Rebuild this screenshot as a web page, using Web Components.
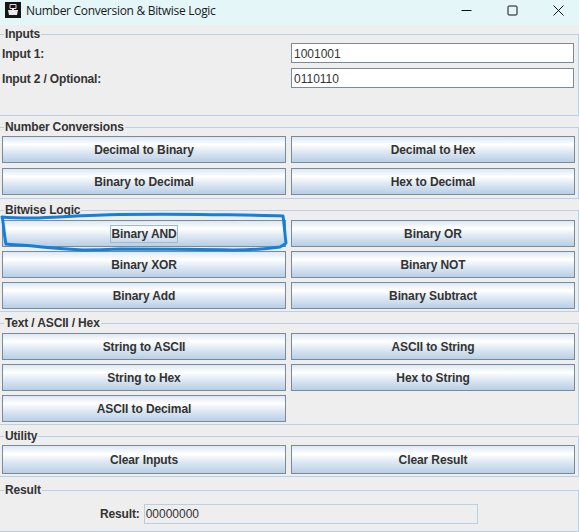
<!DOCTYPE html>
<html><head><meta charset="utf-8"><title>Number Conversion</title>
<style>
html,body{margin:0;padding:0;background:#eee;}
body{width:579px;height:532px;overflow:hidden;font:bold 12px "Liberation Sans",Arial,sans-serif;color:#333;letter-spacing:-.15px}
app-window{width:579px;height:532px;}
</style></head><body>
<template id="t-btn"><style>
:host{display:block;min-width:0}
button{display:block;width:100%;height:var(--h,27px);margin:0;padding:0;border:1px solid #7a8a99;background:linear-gradient(#dde8f3 0,#fff 30%,#dde8f3 60%,#b8cfe5 100%);font:bold 12px "Liberation Sans",Arial,sans-serif;letter-spacing:-.1px;color:#333;text-align:center;}
span{display:inline-block;padding:0;line-height:16px;border:1px solid transparent}
:host([focused]) span{border-color:#a3b8cc}
</style><button tabindex="-1"><span><slot></slot></span></button></template>

<template id="t-panel"><style>
:host{display:block}
fieldset{margin:0;padding:var(--pt,3px) 2px 2px 1px;border:1px solid #b8cfe5;border-left-width:0;min-width:0;box-sizing:border-box;height:var(--ph,auto)}
legend{margin-left:3px;padding:0 1px;height:14px;font:bold 12px/14px "Liberation Sans",Arial,sans-serif;letter-spacing:-.15px;color:#333}
.grid{display:grid;grid-template-columns:284px 284px;column-gap:5px;row-gap:var(--gap,4px);padding-left:1px;align-content:start}
</style><fieldset><legend><slot name="title"></slot></legend><div class="grid"><slot></slot></div></fieldset></template>

<template id="t-title"><style>
:host{display:flex;align-items:center;box-sizing:border-box;height:25px;padding-bottom:5px;background:#e5f6f9;font:12px "Open Sans","Noto Sans",sans-serif;letter-spacing:-.3px;color:#1a1a1a}
.icon{width:16px;height:16px;margin:0 5px;flex:none}
.t{flex:1;white-space:nowrap}
.c{box-sizing:border-box;width:46px;padding-left:4px;display:flex;align-items:center;justify-content:center;flex:none}
</style>
<svg class="icon" viewBox="0 0 16 16"><rect width="16" height="16" fill="#141414"/><path d="M5 2.500h6v4H5z" fill="none" stroke="#ddd"/><path d="M3 8h10l-1 5H4zM7 6h2v3H7z" fill="#e8e8e8"/></svg>
<span class="t"><slot></slot></span>
<span class="c"><svg width="11" height="11" viewBox="0 0 11 11"><path d="M0.500 5.500h10" stroke="#111" fill="none"/></svg></span>
<span class="c"><svg width="11" height="11" viewBox="0 0 11 11"><rect x="1" y="1" width="9" height="9" rx="1" stroke="#111" fill="none"/></svg></span>
<span class="c"><svg width="11" height="11" viewBox="0 0 11 11"><path d="M0.500 0.500l10 10M10.500 0.500l-10 10" stroke="#111" fill="none"/></svg></span>
</template>

<template id="t-field"><style>
:host{display:grid;grid-template-columns:289px 283px;align-items:center;height:20px}
.l{padding-top:1px}
.v{height:20px;box-sizing:border-box;border:1px solid #7a8a99;background:#fff;font:12px/20px "Liberation Sans",Arial,sans-serif;letter-spacing:0;color:#333;padding-left:2px}
</style><span class="l"><slot></slot></span><span class="v"><slot name="value"></slot></span></template>

<template id="t-result"><style>
:host{display:flex;align-items:center;height:20px;padding-left:98px}
.v{width:334px;height:20px;box-sizing:border-box;border:1px solid #b8cfe5;margin-left:4px;font:12px/18px "Liberation Sans",Arial,sans-serif;letter-spacing:0;color:#333;padding-left:1px}
</style><slot></slot><span class="v"><slot name="value"></slot></span></template>

<template id="t-win"><style>
:host{display:block;position:relative;background:#eee;overflow:hidden}
.body{display:flex;flex-direction:column}
svg{position:absolute;left:0;top:210px}
</style><slot name="bar"></slot><div class="body"><slot></slot></div>
<svg width="295" height="45" viewBox="0 0 295 45"><path d="M2 7C12 8 24 8 33 8C60 7 90 5 120 4.500C150 4 175 4 200 4.500C230 5 260 5 283 6C284 12 285 26 286 33C284 35 282 36 280 37C265 39 250 40 233 40C195 39 155 39 120 39C100 40 90 40 83 40C65 39 48 38 33 36C22 35 12 35 6 34C4 25 4 15 2 7Z" fill="none" stroke="#1580dc" stroke-width="3" stroke-linejoin="round"/></svg></template>

<app-window>
  <title-bar slot="bar">Number Conversion &amp; Bitwise Logic</title-bar>
  <group-panel style="margin-top:2px;--ph:89px;--pt:2px;--gap:5px">
    <span slot="title">Inputs</span>
    <text-row style="grid-column:1/3">Input 1:<span slot="value">1001001</span></text-row>
    <text-row style="grid-column:1/3">Input 2 / Optional:<span slot="value">0110110</span></text-row>
  </group-panel>
  <group-panel style="margin-top:4px;--ph:79px;--pt:2px;--gap:5px">
    <span slot="title">Number Conversions</span>
    <ui-btn>Decimal to Binary</ui-btn><ui-btn>Decimal to Hex</ui-btn>
    <ui-btn>Binary to Decimal</ui-btn><ui-btn>Hex to Decimal</ui-btn>
  </group-panel>
  <group-panel style="margin-top:4px;--ph:109px">
    <span slot="title">Bitwise Logic</span>
    <ui-btn focused>Binary AND</ui-btn><ui-btn>Binary OR</ui-btn>
    <ui-btn>Binary XOR</ui-btn><ui-btn>Binary NOT</ui-btn>
    <ui-btn>Binary Add</ui-btn><ui-btn>Binary Subtract</ui-btn>
  </group-panel>
  <group-panel style="margin-top:4px;--ph:109px">
    <span slot="title">Text / ASCII / Hex</span>
    <ui-btn>String to ASCII</ui-btn><ui-btn>ASCII to String</ui-btn>
    <ui-btn>String to Hex</ui-btn><ui-btn>Hex to String</ui-btn>
    <ui-btn>ASCII to Decimal</ui-btn>
  </group-panel>
  <group-panel style="margin-top:4px;--ph:48px;--pt:2px;--h:29px">
    <span slot="title">Utility</span>
    <ui-btn>Clear Inputs</ui-btn><ui-btn>Clear Result</ui-btn>
  </group-panel>
  <group-panel style="margin-top:6px;--ph:49px;--pt:7px">
    <span slot="title">Result</span>
    <result-row style="grid-column:1/3"><span>Result:</span><span slot="value">00000000</span></result-row>
  </group-panel>
</app-window>
<script>
const reg=(n,t)=>customElements.define(n,class extends HTMLElement{constructor(){super();this.attachShadow({mode:'open'}).append(document.getElementById(t).content.cloneNode(true));}});
reg('ui-btn','t-btn');reg('group-panel','t-panel');reg('title-bar','t-title');reg('text-row','t-field');reg('result-row','t-result');reg('app-window','t-win');
</script>
</body></html>
